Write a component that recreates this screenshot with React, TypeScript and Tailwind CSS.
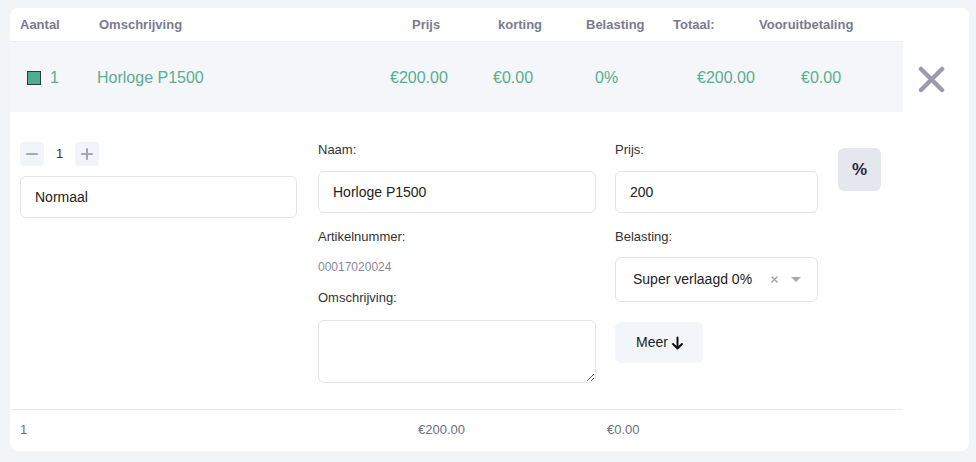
import React from "react";

const font = { fontFamily: '"Liberation Sans", Arial, sans-serif' };

const headers = [
  { label: "Aantal", w: "w-[78px]", pl: "pl-[10px]" },
  { label: "Omschrijving", w: "w-[292px]", pl: "pl-[11px]" },
  { label: "Prijs", w: "w-[105px]", pl: "pl-[32px]" },
  { label: "korting", w: "w-[93px]", pl: "pl-[13px]" },
  { label: "Belasting", w: "w-[87px]", pl: "pl-[8px]" },
  { label: "Totaal:", w: "w-[85px]", pl: "pl-[8px]" },
  { label: "Vooruitbetaling", w: "w-[153px]", pl: "pl-[9px]" },
];

const Label = ({ children, className = "" }: { children: React.ReactNode; className?: string }) => (
  <div className={`text-[13px] leading-[16px] h-[16px] text-[#333] ${className}`}>{children}</div>
);

const inputCls =
  "w-full h-[42px] rounded-md border border-[#e3e5ea] bg-white px-[14px] text-[14px] text-[#222] outline-none";

const App = () => {
  return (
    <div className="w-[976px] h-[462px] bg-[#f2f5f8] pt-[8px] pl-[10px] pr-[7px]" style={font}>
      <div className="h-[443px] bg-white rounded-lg flex">
        {/* table */}
        <div className="w-[893px] flex flex-col">
          <div className="flex h-[34px] pt-[1px] items-center border-b border-[#eceff3] text-[13px] font-bold text-[#7b7b8f]">
            {headers.map((h) => (
              <div key={h.label} className={`${h.w} ${h.pl}`}>
                {h.label}
              </div>
            ))}
          </div>

          <div className="flex h-[70px] pt-[1px] items-center bg-[#f4f6f9] text-[16px] text-[#5aae90]">
            <div className="w-[78px] pl-[17px] flex items-center gap-[9px]">
              <span className="w-[14px] h-[14px] bg-[#4dae90] border border-[#2e3f3a]" />
              <span>1</span>
            </div>
            <div className="w-[292px] pl-[9px]">Horloge P1500</div>
            <div className="w-[105px] pl-[10px]">€200.00</div>
            <div className="w-[93px] pl-[8px]">€0.00</div>
            <div className="w-[87px] pl-[17px]">0%</div>
            <div className="w-[85px] pl-[32px] whitespace-nowrap">€200.00</div>
            <div className="w-[153px] pl-[51px]">€0.00</div>
          </div>

          {/* edit form */}
          <div className="flex pt-[30px] pb-[26px] pl-[10px]">
            <div className="w-[277px]">
              <div className="flex items-center h-[24px]">
                <button className="w-[24px] h-[24px] rounded bg-[#f1f4f8] flex items-center justify-center">
                  <svg width="12" height="12" viewBox="0 0 12 12">
                    <path d="M1 6h10" stroke="#a3a7b3" strokeWidth="2" strokeLinecap="round" />
                  </svg>
                </button>
                <span className="w-[31px] text-center text-[13px] text-[#333]">1</span>
                <button className="w-[24px] h-[24px] rounded bg-[#f1f4f8] flex items-center justify-center">
                  <svg width="12" height="12" viewBox="0 0 12 12">
                    <path d="M1 6h10M6 1v10" stroke="#a3a7b3" strokeWidth="2" strokeLinecap="round" />
                  </svg>
                </button>
              </div>
              <div className="mt-[10px]">
                <input className={inputCls} defaultValue="Normaal" />
              </div>
            </div>

            <div className="w-[278px] ml-[21px]">
              <Label>Naam:</Label>
              <input className={`${inputCls} mt-[13px]`} defaultValue="Horloge P1500" />
              <Label className="mt-[16px]">Artikelnummer:</Label>
              <div className="mt-[14px] text-[12px] leading-[16px] text-[#8a8a96]">00017020024</div>
              <Label className="mt-[15px]">Omschrijving:</Label>
              <textarea className="mt-[14px] block w-full h-[63px] rounded-md border border-[#e3e5ea] outline-none" />
            </div>

            <div className="w-[203px] ml-[19px]">
              <Label>Prijs:</Label>
              <input className={`${inputCls} mt-[13px]`} defaultValue="200" />
              <Label className="mt-[16px]">Belasting:</Label>
              <div className="mt-[12px] h-[45px] rounded-md border border-[#e3e5ea] flex items-center pl-[17px] pr-[16px] text-[14px] text-[#222]">
                <span className="flex-1">Super verlaagd 0%</span>
                <svg width="9" height="9" viewBox="0 0 9 9" className="mr-[12px]">
                  <path d="M1.5 1.5l6 6M7.5 1.5l-6 6" stroke="#a0a0a8" strokeWidth="1.3" />
                </svg>
                <svg width="10" height="6" viewBox="0 0 10 6">
                  <path d="M0 0h10L5 5z" fill="#a8a8b0" />
                </svg>
              </div>
              <button className="mt-[20px] w-[88px] h-[41px] rounded-md bg-[#f2f5f9] flex items-center pl-[21px] text-[14px] text-[#222]">
                Meer
                <svg width="13" height="14" viewBox="0 0 13 14" className="ml-[3px]">
                  <path d="M6.5 1.5v11M2 8l4.5 4.5L11 8" stroke="#111" strokeWidth="2" fill="none" strokeLinecap="round" strokeLinejoin="round" />
                </svg>
              </button>
            </div>

            <div className="ml-[20px] pt-[6px]">
              <button className="w-[43px] h-[43px] rounded-md bg-[#e4e7ee] flex items-center justify-center text-[17px] font-bold text-[#2a2a3a]">
                %
              </button>
            </div>
          </div>

          <div className="h-[41px] border-t border-[#e8ebef] flex items-center pl-[10px] text-[13px] text-[#6e6e82]">
            <span className="w-[398px]">1</span>
            <span className="w-[189px]">€200.00</span>
            <span>€0.00</span>
          </div>
        </div>

        {/* remove */}
        <div className="flex-1 flex justify-center pt-[58px] pr-[10px]">
          <button className="w-[27px] h-[27px]">
            <svg width="27" height="27" viewBox="0 0 27 27">
              <path d="M3 3l21 21M24 3L3 24" stroke="#9b9bae" strokeWidth="4.5" strokeLinecap="round" />
            </svg>
          </button>
        </div>
      </div>
    </div>
  );
};

export default App;
